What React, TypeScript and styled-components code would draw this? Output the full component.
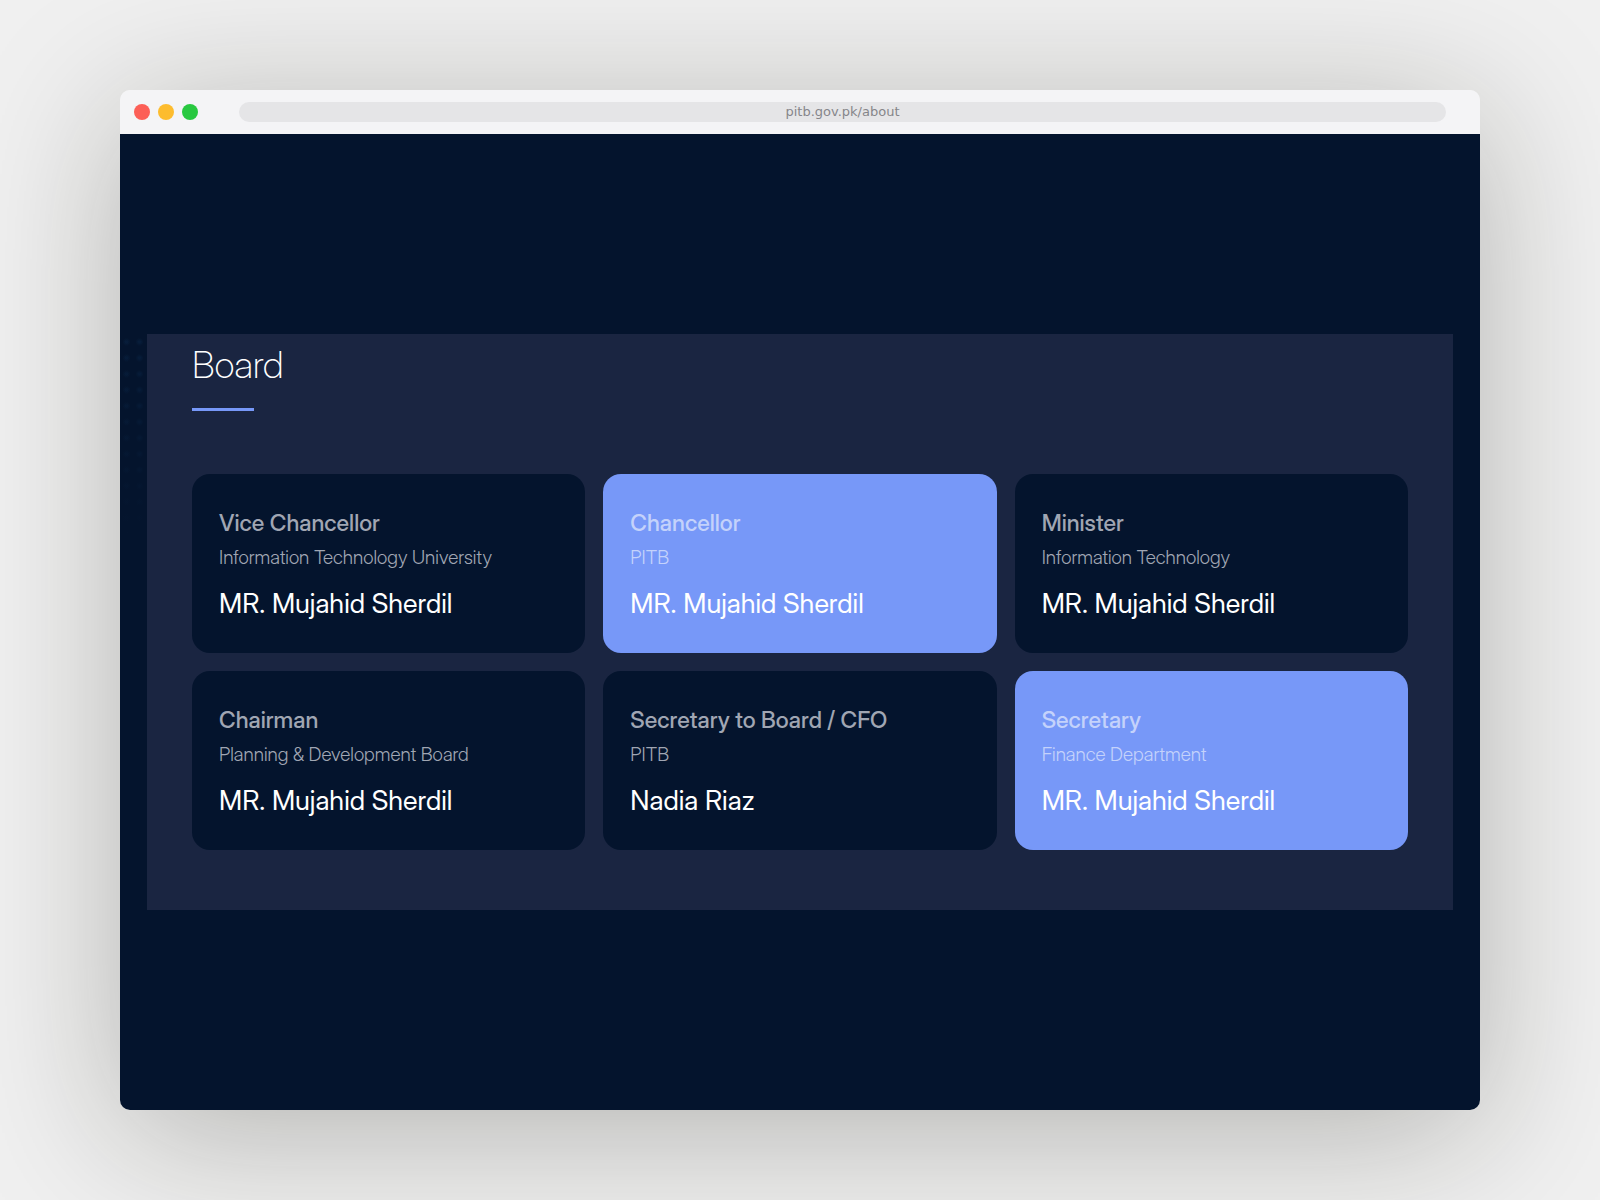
import React from "react";
import styled, { createGlobalStyle } from "styled-components";

const GlobalStyle = createGlobalStyle`
  *, *::before, *::after { box-sizing: border-box; }
  body {
    margin: 0;
    background: #f0f0f0;
    font-family: "Inter Display", Inter, "Liberation Sans", sans-serif;
  }
  h1, h2, p { margin: 0; }
`;

const Stage = styled.div`
  display: flex;
  min-height: 100vh;
  padding: 90px 120px;
  overflow: hidden;
`;

const BrowserWindow = styled.div`
  flex: 1;
  display: flex;
  flex-direction: column;
  overflow: hidden;
  border-radius: 10px;
  box-shadow: 0 24px 150px rgba(20, 20, 10, 0.28);
`;

const TitleBar = styled.header`
  display: flex;
  align-items: center;
  gap: 41px;
  height: 44px;
  padding: 0 34px 0 14px;
  background: #f4f4f6;
`;

const Lights = styled.div`
  display: flex;
  gap: 8px;
`;

const Light = styled.span<{ $color: string }>`
  width: 16px;
  height: 16px;
  border-radius: 50%;
  background: ${({ $color }) => $color};
`;

const Address = styled.input`
  flex: 1;
  min-width: 0;
  height: 20px;
  padding: 0 0 2px;
  border: 0;
  border-radius: 10px;
  background: #e5e5e7;
  color: #85858a;
  font: 13px/18px "DejaVu Sans", sans-serif;
  text-align: center;
`;

const Page = styled.main`
  flex: 1;
  display: flex;
  flex-direction: column;
  justify-content: center;
  background: #04142d;
`;

const Band = styled.div`
  padding: 0 27px;
  background-image:
    linear-gradient(to right, transparent 27px, #04142d 27px),
    linear-gradient(transparent, #04142d 200px),
    radial-gradient(circle, #071d3a 1px, transparent 4px);
  background-size: 100% 100%, 100% 100%, 13px 16px;
`;

const Panel = styled.section`
  padding: 9px 45px 60px;
  background: #1a2541;
`;

const Title = styled.h1`
  color: #fff;
  font-size: 37px;
  font-weight: 200;
  line-height: 44px;
`;

const Rule = styled.div`
  width: 62px;
  height: 3px;
  margin: 21px 0 63px;
  background: #7798f8;
`;

const Members = styled.div`
  display: grid;
  grid-template-columns: repeat(3, minmax(0, 1fr));
  gap: 18px;
`;

const Card = styled.article<{ $accent?: boolean }>`
  padding: 33px 27px 31px;
  border-radius: 18px;
  background: ${({ $accent }) => ($accent ? "#7798f8" : "#04142d")};
  color: ${({ $accent }) => ($accent ? "#c4d2fb" : "#a0a6b3")};
`;

const Role = styled.h2`
  font-size: 23px;
  font-weight: 500;
  line-height: 32px;
`;

const Department = styled.p`
  margin-top: 5px;
  font-size: 19px;
  font-weight: 300;
  line-height: 28px;
`;

const Name = styled.p`
  margin-top: 14px;
  color: #fff;
  font-size: 27px;
  font-weight: 400;
  line-height: 36px;
`;

type Member = { role: string; department: string; name: string; accent?: boolean };

const members: Member[] = [
  { role: "Vice Chancellor", department: "Information Technology University", name: "MR. Mujahid Sherdil" },
  { role: "Chancellor", department: "PITB", name: "MR. Mujahid Sherdil", accent: true },
  { role: "Minister", department: "Information Technology", name: "MR. Mujahid Sherdil" },
  { role: "Chairman", department: "Planning & Development Board", name: "MR. Mujahid Sherdil" },
  { role: "Secretary to Board / CFO", department: "PITB", name: "Nadia Riaz" },
  { role: "Secretary", department: "Finance Department", name: "MR. Mujahid Sherdil", accent: true },
];

export default function App() {
  return (
    <>
      <GlobalStyle />
      <Stage>
        <BrowserWindow>
          <TitleBar>
            <Lights>
              <Light $color="#fc5f57" />
              <Light $color="#fdbc2e" />
              <Light $color="#28c840" />
            </Lights>
            <Address aria-label="Address" type="text" defaultValue="pitb.gov.pk/about" />
          </TitleBar>
          <Page>
            <Band>
              <Panel>
                <Title>Board</Title>
                <Rule />
                <Members>
                  {members.map((member) => (
                    <Card key={member.role} $accent={member.accent}>
                      <Role>{member.role}</Role>
                      <Department>{member.department}</Department>
                      <Name>{member.name}</Name>
                    </Card>
                  ))}
                </Members>
              </Panel>
            </Band>
          </Page>
        </BrowserWindow>
      </Stage>
    </>
  );
}
